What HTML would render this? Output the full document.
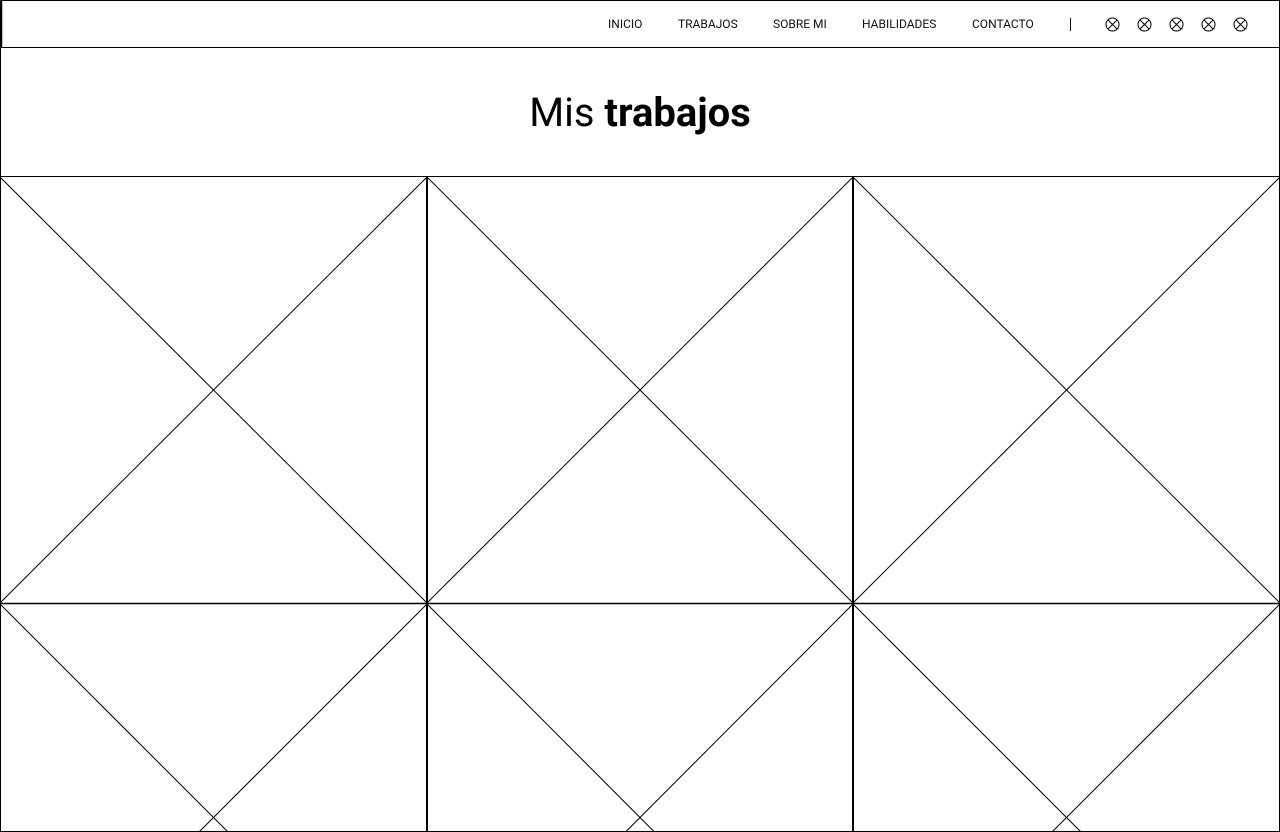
<!DOCTYPE html>
<html><head><meta charset="utf-8"><style>
html,body{margin:0;width:1280px;height:832px;overflow:hidden;background:#fff}
body{font-family:"Roboto","Liberation Sans",sans-serif;position:relative}
.nav a{position:absolute;top:17px;font-size:12px;color:#111;text-decoration:none;letter-spacing:0}
h1{position:absolute;top:89px;left:0;width:1280px;text-align:center;margin:0;font-size:40px;line-height:48px;font-weight:400;color:#000}
svg{position:absolute;left:0;top:0}
</style></head><body>
<svg width="1280" height="832" fill="none" stroke="#000">
<rect x="0.5" y="0.5" width="1279" height="47" stroke-width="1"/>
<line x1="1.5" y1="0" x2="1.5" y2="48" stroke-width="1.5"/>
<line x1="0.5" y1="48" x2="0.5" y2="832"/>
<line x1="1279.5" y1="48" x2="1279.5" y2="832"/>
<line x1="0" y1="831.5" x2="1280" y2="831.5"/>
<line x1="0" y1="176.5" x2="1280" y2="176.5"/>
<line x1="0" y1="603.5" x2="1280" y2="603.5" stroke-width="1.5"/>
<line x1="427" y1="176" x2="427" y2="832" stroke-width="2"/>
<line x1="853" y1="176" x2="853" y2="832" stroke-width="2"/>
<g stroke-width="1">
<line x1="0" y1="177" x2="427" y2="603"/><line x1="427" y1="177" x2="0" y2="603"/>
<line x1="427" y1="177" x2="853" y2="603"/><line x1="853" y1="177" x2="427" y2="603"/>
<line x1="853" y1="177" x2="1280" y2="603"/><line x1="1280" y1="177" x2="853" y2="603"/>
<line x1="0" y1="604" x2="427" y2="1031"/><line x1="427" y1="604" x2="0" y2="1031"/>
<line x1="427" y1="604" x2="853" y2="1031"/><line x1="853" y1="604" x2="427" y2="1031"/>
<line x1="853" y1="604" x2="1280" y2="1031"/><line x1="1280" y1="604" x2="853" y2="1031"/>
</g>
<line x1="1070.5" y1="18" x2="1070.5" y2="31"/>
<g stroke-width="1">
<circle cx="1112.5" cy="24.5" r="6.5"/><path d="M1108 20l9 9M1117 20l-9 9"/>
<circle cx="1144.5" cy="24.5" r="6.5"/><path d="M1140 20l9 9M1149 20l-9 9"/>
<circle cx="1176.5" cy="24.5" r="6.5"/><path d="M1172 20l9 9M1181 20l-9 9"/>
<circle cx="1208.5" cy="24.5" r="6.5"/><path d="M1204 20l9 9M1213 20l-9 9"/>
<circle cx="1240.5" cy="24.5" r="6.5"/><path d="M1236 20l9 9M1245 20l-9 9"/>
</g>
</svg>
<div class="nav">
<a style="left:608px">INICIO</a>
<a style="left:678px">TRABAJOS</a>
<a style="left:773px">SOBRE MI</a>
<a style="left:862px">HABILIDADES</a>
<a style="left:972px">CONTACTO</a>
</div>
<h1>Mis <b>trabajos</b></h1>
</body></html>
